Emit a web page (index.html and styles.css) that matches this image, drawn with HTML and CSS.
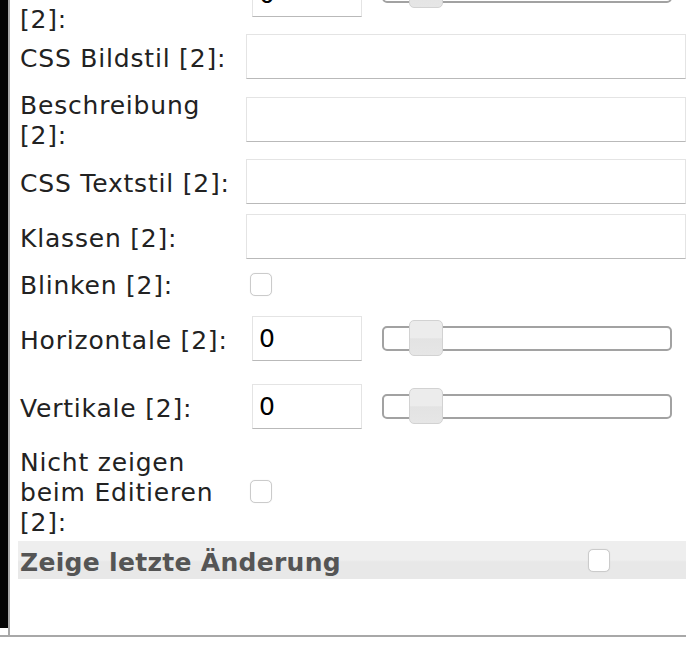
FILE: index.html
```html
<!DOCTYPE html>
<html lang="de">
<head>
<meta charset="utf-8">
<title>Einstellungen</title>
<link rel="stylesheet" href="styles.css">
</head>
<body>
<div class="frame">
  <div class="sidebar"></div>
  <div class="main">
    <div class="row row-top">
      <label class="lbl lbl-top">[2]:</label>
      <input class="num" type="text" value="0">
      <div class="slider"><span class="handle"></span></div>
    </div>
    <div class="row row-first">
      <label class="lbl">CSS Bildstil [2]:</label>
      <input class="txt" type="text">
    </div>
    <div class="row">
      <label class="lbl">Beschreibung [2]:</label>
      <input class="txt" type="text">
    </div>
    <div class="row">
      <label class="lbl">CSS Textstil [2]:</label>
      <input class="txt" type="text">
    </div>
    <div class="row">
      <label class="lbl">Klassen [2]:</label>
      <input class="txt" type="text">
    </div>
    <div class="row">
      <label class="lbl">Blinken [2]:</label>
      <span class="check"></span>
    </div>
    <div class="row row-slider">
      <label class="lbl">Horizontale [2]:</label>
      <input class="num" type="text" value="0">
      <div class="slider"><span class="handle"></span></div>
    </div>
    <div class="row row-slider2">
      <label class="lbl">Vertikale [2]:</label>
      <input class="num" type="text" value="0">
      <div class="slider"><span class="handle"></span></div>
    </div>
    <div class="row row-after">
      <label class="lbl">Nicht zeigen beim Editieren [2]:</label>
      <span class="check"></span>
    </div>
    <div class="band">
      <span class="band-title">Zeige letzte Änderung</span>
      <span class="check band-check"></span>
    </div>
  </div>
</div>
</body>
</html>
```
FILE: styles.css
```css
html, body {
  margin: 0;
  padding: 0;
  background: #fff;
}
body {
  font-family: "DejaVu Sans", Verdana, sans-serif;
  font-size: 25px;
  letter-spacing: 0.8px;
  line-height: 30px;
  color: #222;
  overflow: hidden;
}
.frame {
  width: 686px;
  height: 635px;
  display: flex;
  align-items: stretch;
  border-bottom: 2px solid #a8a8a8;
  overflow: hidden;
}
.sidebar {
  width: 8px;
  flex: none;
  background: #050505;
  margin-bottom: 7px;
}
.main {
  flex: 1;
  border-left: 2px solid #a8a8a8;
  padding-left: 8px;
  min-width: 0;
}
.row {
  display: flex;
  align-items: center;
  padding-left: 2px;
  margin-top: 10px;
}
.row-top {
  margin-top: -28px;
  align-items: flex-start;
}
.lbl-top {
  margin-top: 31px;
}
.row-first { margin-top: 1px; }
.row-slider { margin-top: 17px; }
.row-slider2 { margin-top: 23px; }
.row-after { margin-top: 17px; }
.lbl {
  width: 220px;
  margin-right: 6px;
  padding-top: 2px;
  margin-bottom: -2px;
  flex: none;
}
.txt, .num {
  box-sizing: border-box;
  height: 45px;
  border: 1px solid #e4e4e4;
  border-bottom-color: #b9b9b9;
  background: #fff;
  font-family: "DejaVu Sans", Verdana, sans-serif;
  font-size: 25px;
  color: #000;
  padding: 0 6px;
  margin: 0;
  outline: none;
}
.txt {
  flex: 1;
  min-width: 0;
}
.num {
  width: 110px;
  flex: none;
  margin-left: 6px;
}
.slider {
  position: relative;
  box-sizing: border-box;
  width: 290px;
  height: 25px;
  margin-left: 20px;
  border: 2px solid #a2a2a2;
  border-radius: 5px;
  background: #fff;
  flex: none;
}
.row-top .slider { margin-top: 6px; }
.handle {
  position: absolute;
  left: 25px;
  top: -8px;
  box-sizing: border-box;
  width: 34px;
  height: 36px;
  border: 1px solid #d2d2d2;
  border-radius: 5px;
  background: linear-gradient(#ececec 0%, #ececec 50%, #e3e3e3 52%, #e6e6e6 100%);
}
.check {
  box-sizing: border-box;
  width: 22px;
  height: 23px;
  margin-left: 4px;
  border: 1px solid #cbcbcb;
  border-radius: 5px;
  background: #fff;
  box-shadow: 0 0 1px rgba(0,0,0,0.12);
  flex: none;
}
.band {
  display: flex;
  align-items: center;
  height: 38px;
  margin-top: 5px;
  padding-left: 2px;
  background: linear-gradient(#eeeeee 0%, #eeeeee 50%, #e8e8e8 55%, #e8e8e8 100%);
}
.band-title {
  font-weight: bold;
  color: #555;
  font-size: 25px;
  letter-spacing: 0.3px;
  padding-top: 3px;
  margin-bottom: -3px;
}
.band-check {
  margin-left: auto;
  margin-right: 76px;
}
```
